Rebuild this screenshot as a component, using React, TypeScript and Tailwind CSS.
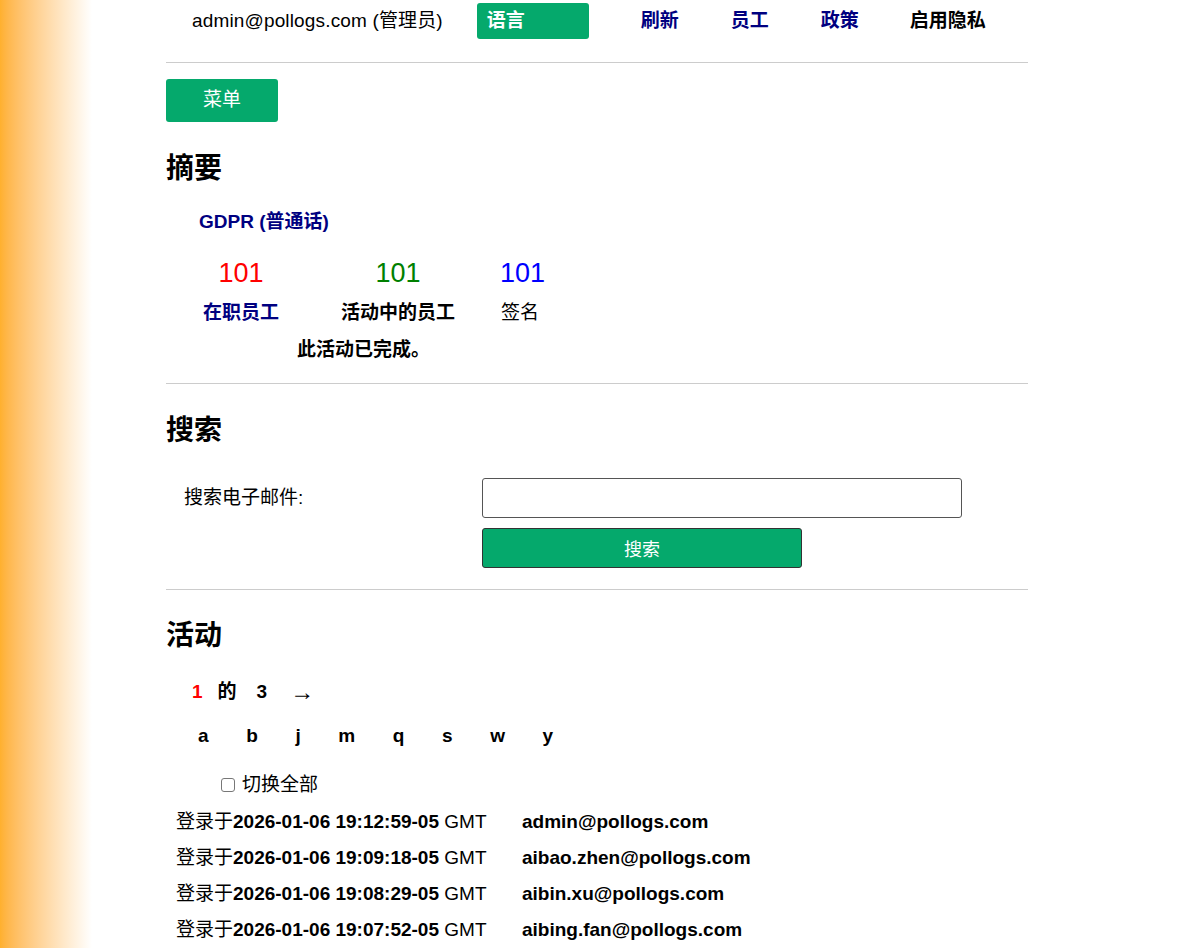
import { useState } from 'react'

const navLinks = ['刷新', '员工', '政策']

const stats = [
  { value: 101, label: '在职员工', valueClass: 'text-[#ff0000]', labelClass: 'text-[#000080]', cell: 'w-[110px]' },
  { value: 101, label: '活动中的员工', valueClass: 'text-[#008000]', labelClass: 'text-black', cell: 'w-[204px]' },
  { value: 101, label: '签名', valueClass: 'text-[#0000ff]', labelClass: 'text-black font-normal', cell: 'w-[40px]' },
]

const letters = ['a', 'b', 'j', 'm', 'q', 's', 'w', 'y']

const logins = [
  { at: '2026-01-06 19:12:59-05', email: 'admin@pollogs.com' },
  { at: '2026-01-06 19:09:18-05', email: 'aibao.zhen@pollogs.com' },
  { at: '2026-01-06 19:08:29-05', email: 'aibin.xu@pollogs.com' },
  { at: '2026-01-06 19:07:52-05', email: 'aibing.fan@pollogs.com' },
]

function Rule({ className = '' }: { className?: string }) {
  return <div className={`h-px w-[862px] bg-[#cccccc] ${className}`} />
}

export default function App() {
  const [email, setEmail] = useState('')
  const [toggleAll, setToggleAll] = useState(false)

  return (
    <div
      className="flex min-h-screen bg-white text-[19px] text-black"
      style={{ fontFamily: '"Liberation Sans", Arial, "Noto Sans CJK SC", sans-serif' }}
    >
      <div className="w-[92px] shrink-0 bg-gradient-to-r from-[#ffb02e] to-white" />
      <div className="ml-[74px] flex flex-col">
        {/* top bar */}
        <div className="flex h-[42px] items-center pl-[26px]">
          <span className="leading-6 tracking-[0.15px]">admin@pollogs.com (管理员)</span>
          <button className="ml-[34px] h-[36px] w-[112px] rounded-[3px] bg-[#05a96c] pl-[10px] text-left font-bold text-white">
            语言
          </button>
          {navLinks.map((link) => (
            <a key={link} href="#" className="ml-[52px] font-bold text-[#000080]">
              {link}
            </a>
          ))}
          <a href="#" className="ml-[51px] font-bold text-black">
            启用隐私
          </a>
        </div>
        <Rule className="mt-[20px]" />

        <button className="mt-[16px] h-[43px] w-[112px] rounded-[3px] bg-[#05a96c] text-white">
          菜单
        </button>

        {/* summary */}
        <h2 className="mt-[31px] text-[28px] font-bold leading-8">摘要</h2>
        <div className="mt-[25px] pl-[33px] font-bold leading-6 text-[#000080]">GDPR (普通话)</div>
        <div className="mt-[23px] flex pl-[20px]">
          {stats.map((s) => (
            <div key={s.label} className={`${s.cell} text-center text-[27px] leading-8 ${s.valueClass}`}>
              {s.value}
            </div>
          ))}
        </div>
        <div className="mt-[12px] flex pl-[20px]">
          {stats.map((s) => (
            <div key={s.label} className={`${s.cell} whitespace-nowrap text-center font-bold leading-6 ${s.labelClass}`}>
              {s.label}
            </div>
          ))}
        </div>
        <div className="mt-[13px] pl-[131px] font-bold leading-6">此活动已完成。</div>
        <Rule className="mt-[21px]" />

        {/* search */}
        <h2 className="mt-[31px] text-[28px] font-bold leading-8">搜索</h2>
        <div className="mt-[31px] flex items-center">
          <label className="w-[316px] pl-[18px] leading-6">搜索电子邮件:</label>
          <input
            value={email}
            onChange={(e) => setEmail(e.target.value)}
            className="h-[40px] w-[480px] rounded-[3px] border border-[#555] bg-white px-2 outline-none"
          />
        </div>
        <button className="ml-[316px] mt-[10px] h-[40px] w-[320px] rounded-[3px] border border-[#333] bg-[#05a96c] pt-[4px] text-[18px] text-white">
          搜索
        </button>
        <Rule className="mt-[21px]" />

        {/* activity */}
        <h2 className="mt-[30px] text-[28px] font-bold leading-8">活动</h2>
        <div className="mt-[28px] flex items-center pl-[26px] font-bold leading-6">
          <span className="text-[#ff0000]">1</span>
          <span className="ml-[15px]">的</span>
          <span className="ml-[20px]">3</span>
          <span className="ml-[23px] text-[24px] font-normal" style={{ fontFamily: '"Liberation Serif", serif' }}>
            →
          </span>
        </div>
        <div className="mt-[20px] flex gap-[37.6px] pl-[32px] font-bold leading-6">
          {letters.map((l) => (
            <a key={l} href="#">
              {l}
            </a>
          ))}
        </div>
        <label className="mt-[25px] flex items-center pl-[55px] leading-6">
          <input
            type="checkbox"
            checked={toggleAll}
            onChange={(e) => setToggleAll(e.target.checked)}
            className="h-[14px] w-[14px] appearance-none rounded-[3px] border border-[#777] bg-white"
          />
          <span className="ml-[7px]">切换全部</span>
        </label>
        <div className="mt-[7px] pl-[10px]">
          {logins.map((row) => (
            <div key={row.email} className="flex h-[36px] items-center">
              <span className="w-[346px] whitespace-nowrap">
                登录于<b>{row.at}</b> GMT
              </span>
              <span className="font-bold">{row.email}</span>
            </div>
          ))}
        </div>
      </div>
    </div>
  )
}
